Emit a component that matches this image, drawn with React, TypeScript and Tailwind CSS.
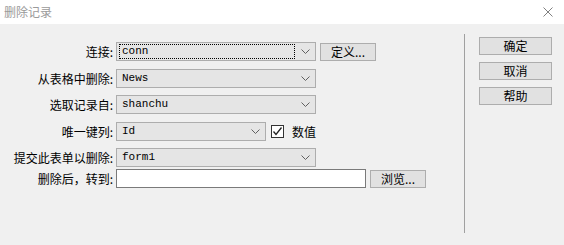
import React from "react";

const cjk = "font-['Noto_Sans_CJK_SC','Noto_Sans',sans-serif]";
const mono = "font-['Liberation_Mono',monospace]";

function Chevron() {
  return (
    <svg width="9" height="5" viewBox="0 0 9 5" className="shrink-0">
      <path d="M0.5 0.5 L4.5 4.5 L8.5 0.5" fill="none" stroke="#606060" strokeWidth="1" />
    </svg>
  );
}

function Select({ value, width, focused }: { value: string; width: string; focused?: boolean }) {
  return (
    <div className={`${width} h-[19px] flex items-center border border-[#adadad] bg-[#e5e5e5] pl-[2px] pr-[5px]`}>
      <div
        className={`flex-1 h-[15px] flex items-center pl-[2px] ${
          focused ? "border border-dotted border-black" : "border border-transparent"
        } mr-[6px]`}
      >
        <span className={`${mono} text-[11px] leading-none text-black`}>{value}</span>
      </div>
      <Chevron />
    </div>
  );
}

function Button({ label, className = "" }: { label: string; className?: string }) {
  return (
    <div
      className={`h-[18px] flex items-center justify-center border border-[#adadad] bg-[#e1e1e1] text-[12px] leading-none text-black ${className}`}
    >
      {label}
    </div>
  );
}

function Row({ label, className = "", children }: { label: string; className?: string; children: React.ReactNode }) {
  return (
    <div className={`flex items-center h-[19px] ${className}`}>
      <div className="w-[113px] text-right text-[12px] leading-none text-black whitespace-nowrap">{label}</div>
      <div className="ml-[3px] flex items-center">{children}</div>
    </div>
  );
}

export default function App() {
  return (
    <div className={`w-[564px] h-[245px] bg-[#f0f0f0] flex flex-col overflow-hidden ${cjk}`}>
      <div className="h-[24px] bg-white flex items-center justify-between pl-[4px] pr-[11px]">
        <span className="text-[12px] leading-none text-[#9a9a9a]">删除记录</span>
        <svg width="10" height="10" viewBox="0 0 10 10">
          <path d="M0.5 0.5 L9.5 9.5 M9.5 0.5 L0.5 9.5" stroke="#808080" strokeWidth="1" fill="none" />
        </svg>
      </div>

      <div className="flex flex-1">
        <div className="w-[464px] pt-[18px] flex flex-col">
          <Row label="连接:">
            <Select value="conn" width="w-[200px]" focused />
            <Button label="定义..." className="ml-[4px] w-[56px]" />
          </Row>
          <Row label="从表格中删除:" className="mt-[8px]">
            <Select value="News" width="w-[200px]" />
          </Row>
          <Row label="选取记录自:" className="mt-[7px]">
            <Select value="shanchu" width="w-[200px]" />
          </Row>
          <Row label="唯一键列:" className="mt-[8px]">
            <Select value="Id" width="w-[150px]" />
            <div className="ml-[5px] w-[13px] h-[13px] border border-[#333333] bg-white flex items-center justify-center">
              <svg width="11" height="11" viewBox="0 0 11 11">
                <path d="M1.5 5.5 L4 8.5 L9.5 1.5" fill="none" stroke="#222222" strokeWidth="1.3" />
              </svg>
            </div>
            <span className="ml-[8px] text-[12px] leading-none text-black">数值</span>
          </Row>
          <Row label="提交此表单以删除:" className="mt-[7px]">
            <Select value="form1" width="w-[200px]" />
          </Row>
          <Row label="删除后，转到:" className="mt-[2px]">
            <div className="w-[250px] h-[19px] border border-[#7a7a7a] bg-white" />
            <Button label="浏览..." className="ml-[4px] w-[56px]" />
          </Row>
        </div>

        <div className="mt-[10px] w-px h-[199px] bg-[#a0a0a0]" />

        <div className="ml-[14px] pt-[13px] flex flex-col gap-[7px]">
          <Button label="确定" className="w-[73px]" />
          <Button label="取消" className="w-[73px]" />
          <Button label="帮助" className="w-[73px]" />
        </div>
      </div>
    </div>
  );
}
